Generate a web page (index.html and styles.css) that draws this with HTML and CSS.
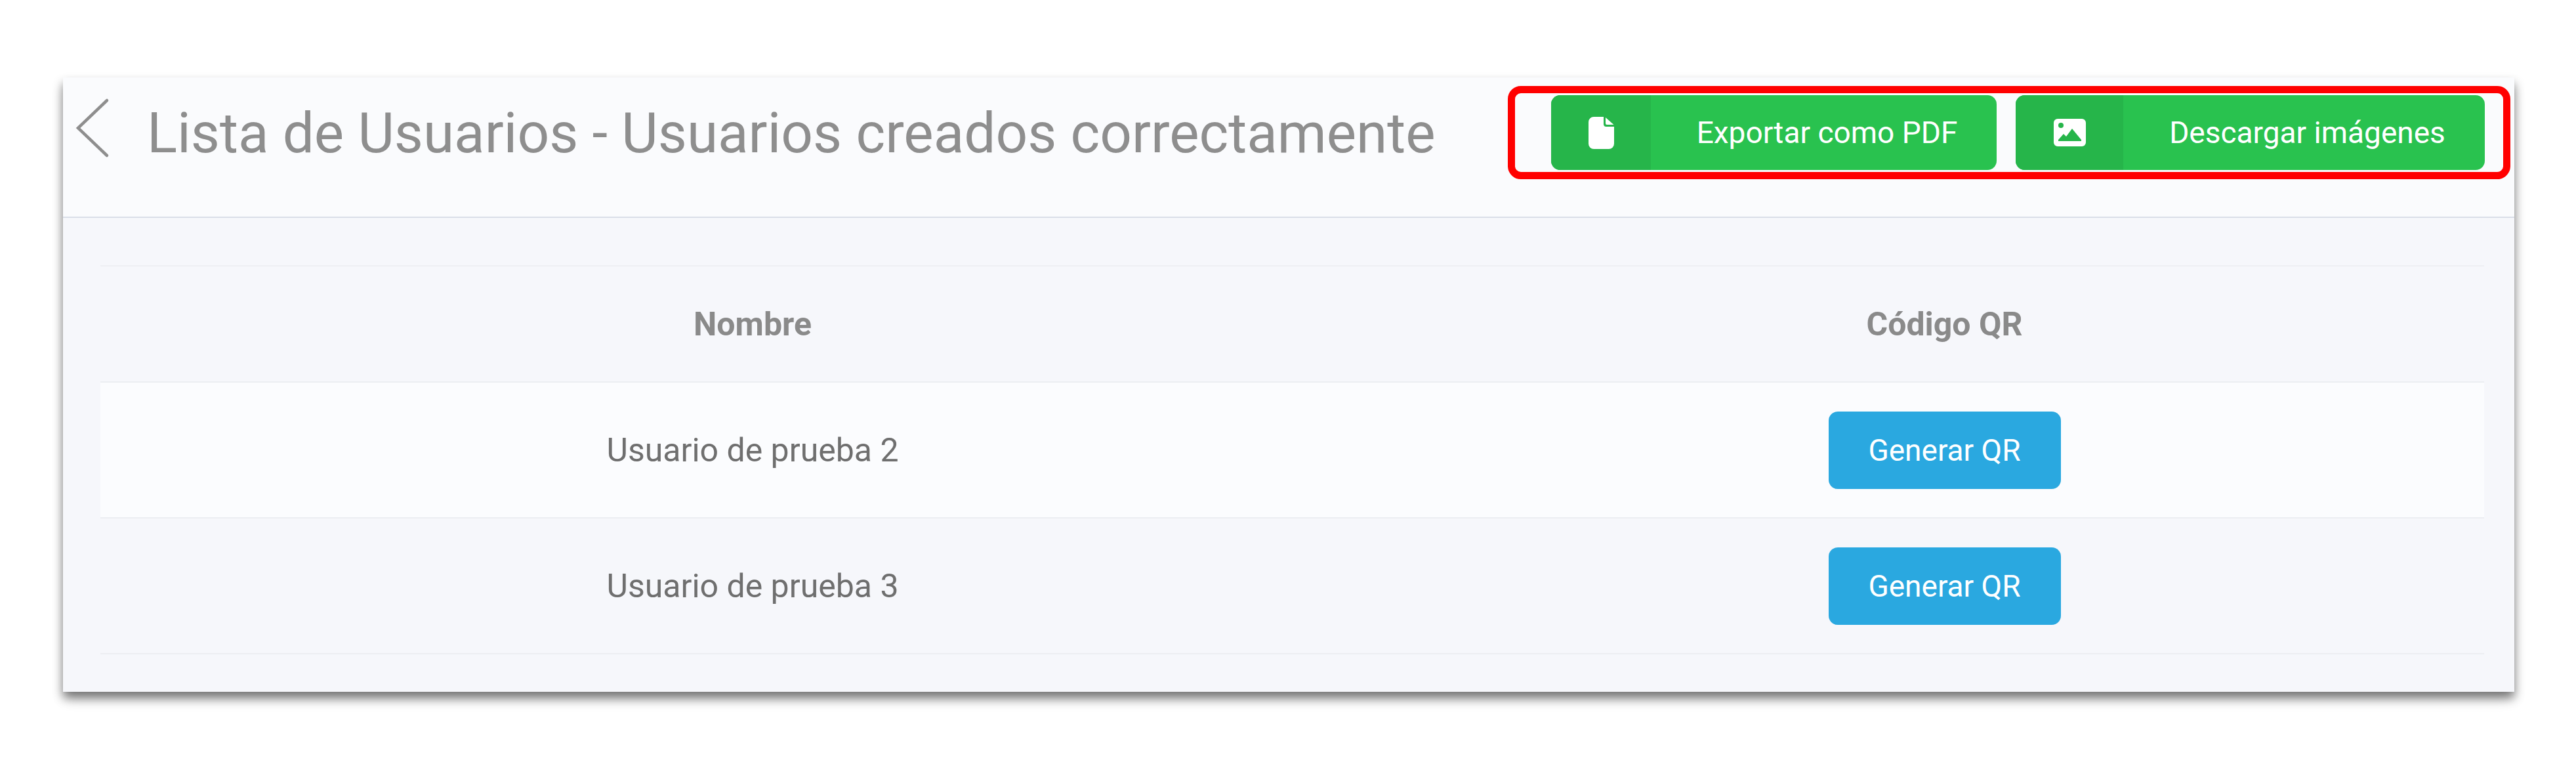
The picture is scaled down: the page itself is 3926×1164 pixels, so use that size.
FILE: index.html
```html
<!DOCTYPE html>
<html lang="es">
<head>
<meta charset="utf-8">
<title>Lista de Usuarios</title>
<link rel="stylesheet" href="styles.css">
</head>
<body>
<main class="panel">
  <header class="head">
    <div class="head-left">
      <svg class="back" viewBox="0 0 52 92" aria-hidden="true"><path d="M48 4 4 46l44 42"/></svg>
      <h1 class="title">Lista de Usuarios - Usuarios creados correctamente</h1>
    </div>
    <div class="actions">
      <a class="action action-pdf"><span class="action-icon"><svg class="ico-file" viewBox="0 0 39 49"><path d="M8 0H23V11a4 4 0 0 0 4 4H39V41a8 8 0 0 1-8 8H8a8 8 0 0 1-8-8V8a8 8 0 0 1 8-8Z"/><path d="M26 1 38.500 12H28a2 2 0 0 1-2-2Z"/></svg></span><span class="action-label">Exportar como PDF</span></a>
      <a class="action action-img"><span class="action-icon"><svg class="ico-image" viewBox="0 0 49 42"><path fill-rule="evenodd" d="M6 0H43a6 6 0 0 1 6 6V36a6 6 0 0 1-6 6H6a6 6 0 0 1-6-6V6a6 6 0 0 1 6-6ZM11 6a4 4 0 1 0 0 8 4 4 0 0 0 0-8ZM7 34H42V32L28 15 19 27 15 23 7 32Z"/></svg></span><span class="action-label">Descargar imágenes</span></a>
      <div class="highlight"></div>
    </div>
  </header>
  <section class="table">
    <div class="row row-head"><div class="cell">Nombre</div><div class="cell">Código QR</div></div>
    <div class="row row-odd"><div class="cell">Usuario de prueba 2</div><div class="cell"><a class="qr">Generar QR</a></div></div>
    <div class="row"><div class="cell">Usuario de prueba 3</div><div class="cell"><a class="qr">Generar QR</a></div></div>
  </section>
</main>
</body>
</html>
```
FILE: styles.css
```css
* { box-sizing: border-box; }
html, body { margin: 0; background: #fff; }
body { min-height: 100vh; padding: 118px 0 0 96px; font-family: Roboto, "Liberation Sans", sans-serif; }
.panel {
  width: 3736px;
  height: 936px;
  background: #f6f7fb;
  box-shadow: 0 9px 14px rgba(0,0,0,.45), 0 14px 20px -4px rgba(0,0,0,.2);
}
.head {
  height: 214px;
  background: #fafbfd;
  border-bottom: 2px solid #d9dee8;
  display: flex;
  justify-content: space-between;
  align-items: flex-start;
  padding-left: 19px;
  padding-right: 45px;
}
.head-left { display: flex; align-items: center; height: 154px; }
.back { width: 52px; height: 92px; fill: none; stroke: #8e8e8e; stroke-width: 4.5; stroke-linecap: round; margin-right: 57px; }
.title { margin: 16px 0 0; font-size: 85.500px; font-weight: 400; color: #8e8e8e; white-space: nowrap; }
.actions { position: relative; display: flex; gap: 29px; margin-top: 27px; }
.action { display: flex; height: 114px; border-radius: 14px; background: #29c24f; color: #fff; overflow: hidden; font-size: 46px; }
.action-pdf { width: 679px; }
.action-img { width: 715px; }
.action-icon { display: flex; align-items: center; justify-content: center; background: #26b54a; }
.action-pdf .action-icon { width: 152px; }
.action-img .action-icon { width: 164px; }
.action-label { flex: 1; display: flex; align-items: center; justify-content: center; padding-left: 10px; }
.ico-file { width: 39px; height: 49px; fill: #fff; }
.ico-image { width: 49px; height: 42px; fill: #fff; }
.highlight {
  position: absolute;
  left: -66px; right: -39px; top: -14px; bottom: -14px;
  border: 11px solid #f00;
  border-radius: 20px;
}
.table { margin: 72px 46px 0 57px; border-top: 2px solid #eeeff3; }
.row {
  display: grid;
  grid-template-columns: 1988px 1fr;
  align-items: center;
  height: 207px;
  border-bottom: 2px solid #eceef2;
  font-size: 50px;
  color: #6f6f6f;
}
.row-head { height: 177px; font-weight: 700; color: #8a8a8a; }
.row-odd { background: #fbfcfe; }
.cell { text-align: center; }
.qr {
  display: inline-flex; align-items: center; justify-content: center;
  width: 354px; height: 118px;
  background: #2aa8e0; color: #fff; border-radius: 14px;
  font-size: 46px;
  vertical-align: middle;
}
```
